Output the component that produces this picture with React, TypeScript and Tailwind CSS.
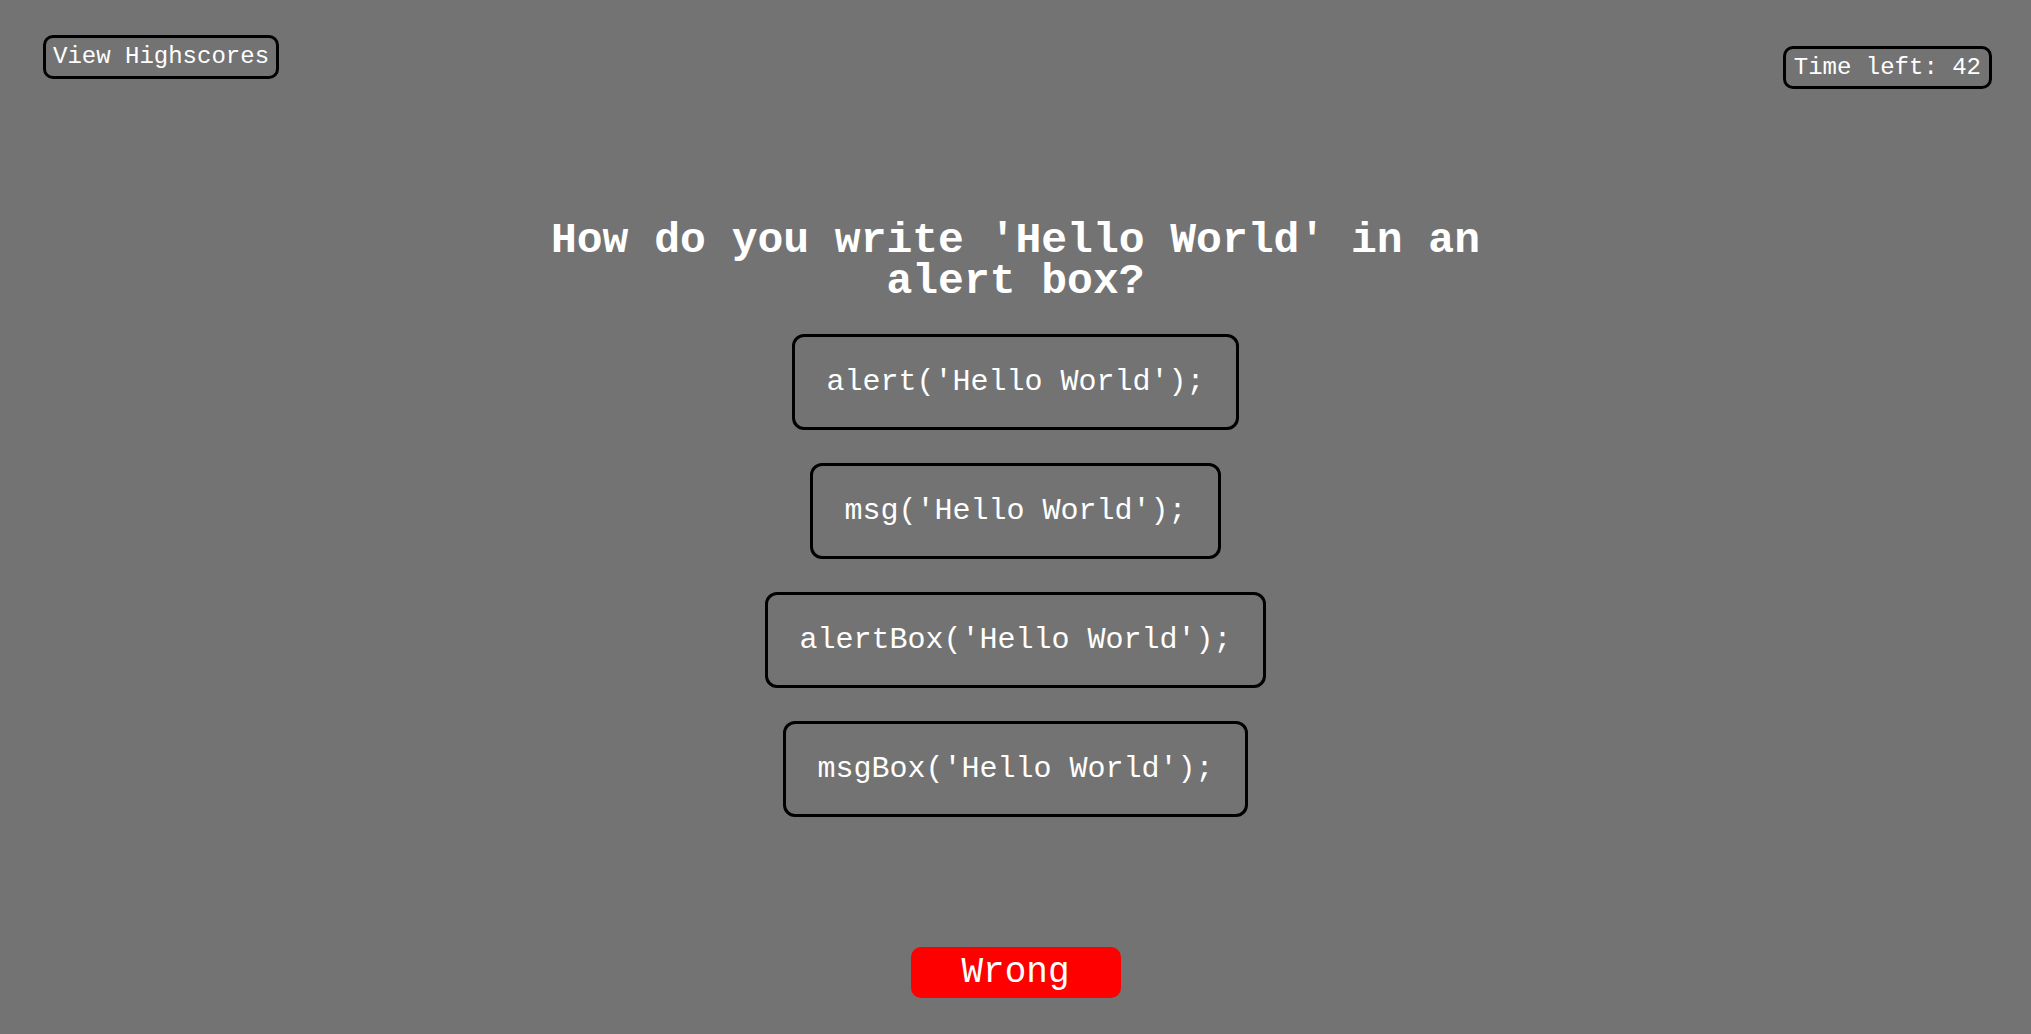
import React from 'react';

const answers = [
  "alert('Hello World');",
  "msg('Hello World');",
  "alertBox('Hello World');",
  "msgBox('Hello World');",
];

const mono = { fontFamily: '"Liberation Mono", "DejaVu Sans Mono", monospace' };

const App: React.FC = () => {
  return (
    <div className="min-h-screen bg-[#737373] text-white font-['Liberation_Mono',monospace]" style={mono}>
      <header className="flex justify-between items-start pt-[35px] pl-[43px] pr-[39px]">
        <button className="h-[44px] px-[7px] flex items-center border-[3px] border-black rounded-[10px] text-[24px] leading-none">
          View Highscores
        </button>
        <div className="mt-[11px] h-[43px] px-[8px] flex items-center border-[3px] border-black rounded-[10px] text-[24px] leading-none">
          Time left: 42
        </div>
      </header>

      <main className="flex flex-col items-center">
        <h2 className="mt-[131px] w-[1000px] text-center font-bold text-[43px] leading-[41px]">
          How do you write 'Hello World' in an alert box?
        </h2>

        <div className="mt-[32px] flex flex-col items-center gap-[33px]">
          {answers.map((a) => (
            <button
              key={a}
              className="h-[96px] px-[31px] flex items-center border-[3px] border-black rounded-[12px] text-[30px] leading-none whitespace-pre"
            >
              {a}
            </button>
          ))}
        </div>

        <div className="mt-[130px] w-[210px] h-[51px] flex items-center justify-center bg-[#ff0000] rounded-[10px] text-[36px] leading-none">
          Wrong
        </div>
      </main>
    </div>
  );
};

export default App;
